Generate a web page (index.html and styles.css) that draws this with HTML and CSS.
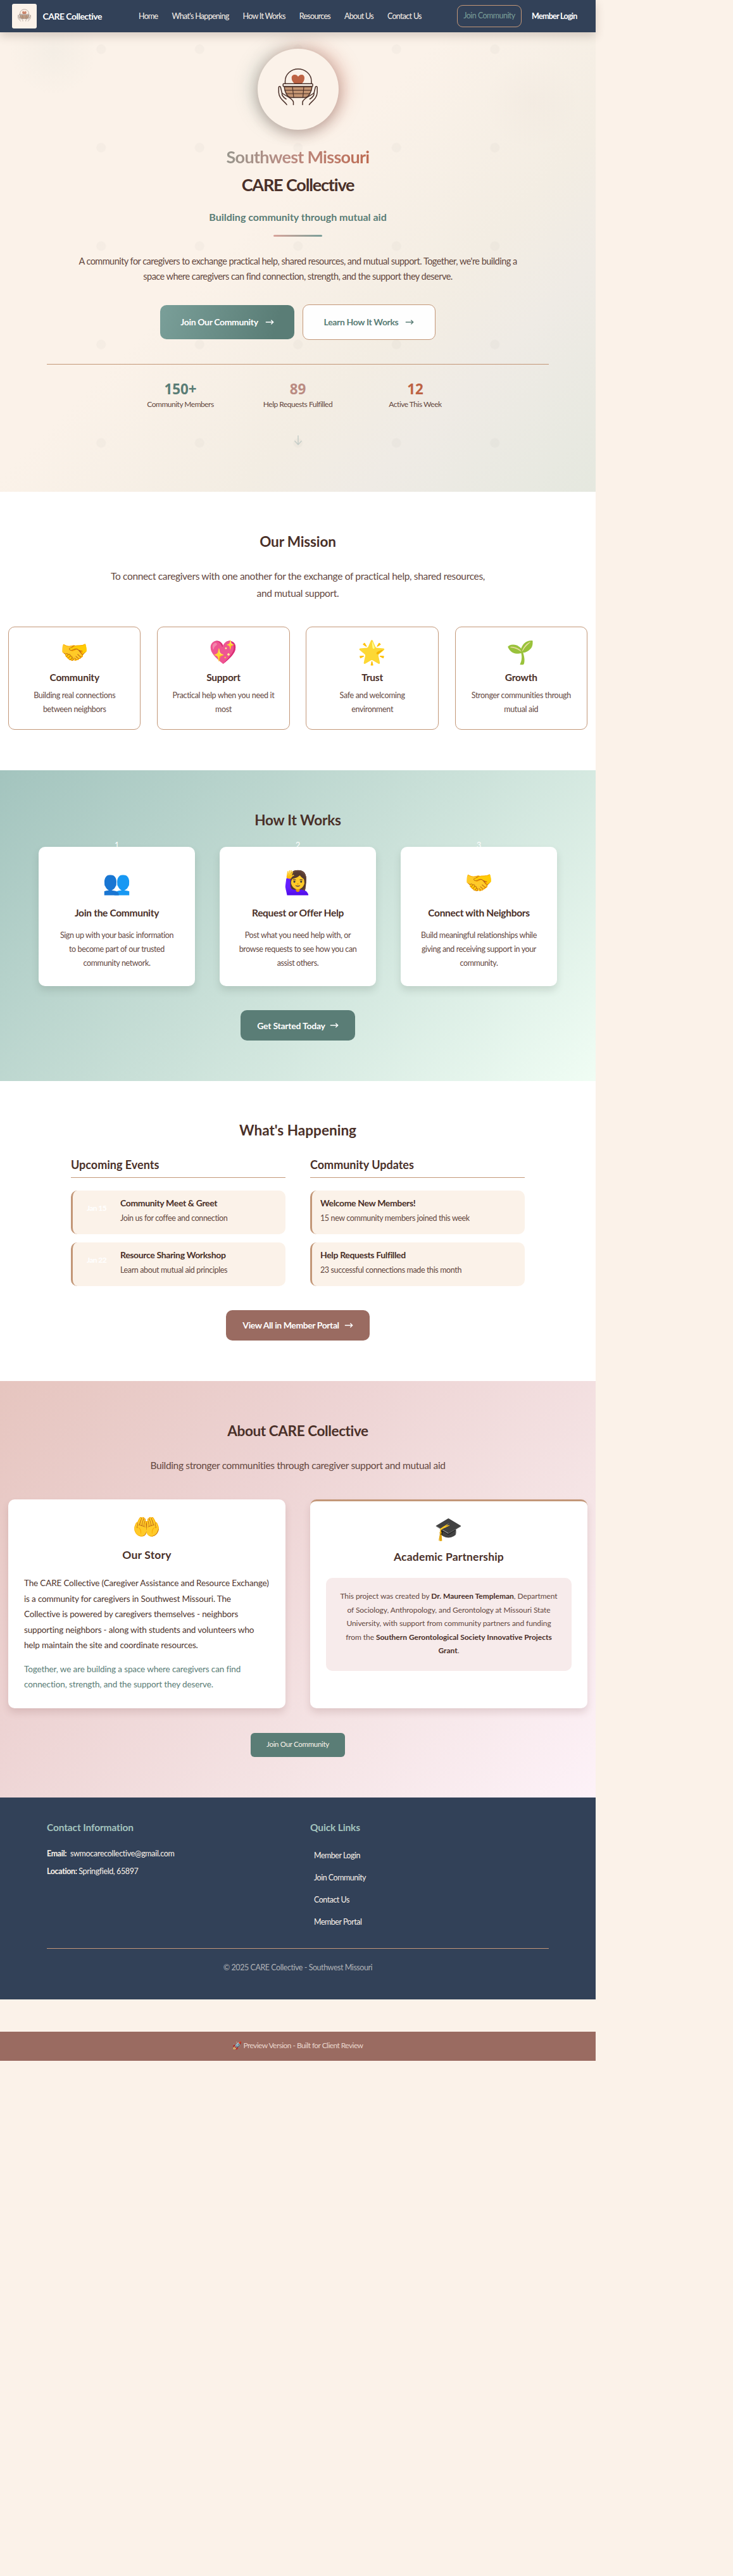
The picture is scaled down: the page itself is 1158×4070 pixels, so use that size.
FILE: index.html
```html
<!DOCTYPE html>
<html lang="en">
<head>
<meta charset="utf-8">
<title>CARE Collective</title>
<link rel="stylesheet" href="styles.css">
</head>
<body>
<svg class="defs" width="0" height="0">
  <symbol id="logo" viewBox="9 12 64 60">
    <g fill="none" stroke="#4a3029" stroke-width="1.5" stroke-linecap="round" stroke-linejoin="round">
      <path d="M20.500 37V33.500C20.500 22 30 14 41 14S62 22 62 33.500V37"/>
      <path fill="#bd6344" stroke="none" d="M35 37C32 34 30.700 31.500 30.700 28C30.700 24.500 33 23 35.800 23C38.500 23 40 24.500 41 26.300C42 24.500 43.800 23 46.400 23C49.500 23 51 25 51 28C51 31.500 49.500 34.500 47 37Z"/>
      <path fill="#c39472" d="M19 42C20 51 24 59 30 59H52C57 59 62 51 63 42Z"/>
      <path d="M20 47.500H62M22 53H60M32 42L34 59M50 42L48.500 59" stroke-width="1.200"/>
      <rect x="17.200" y="37.300" width="46.800" height="4.300" rx="1" fill="#fbf2e9"/>
      <path fill="#fbf2e9" d="M23 70.500C20 65 11 62 10.300 51V43C10.500 41 13 41 13.300 43L15.500 52C22 57 32 60 33.500 66V70.500"/>
      <path d="M15.500 52C15 55 18 59 22 61.500"/>
      <path fill="#fbf2e9" d="M58.500 70.500C61.500 65 70.500 62 71.200 51V43C71 41 68.500 41 68.200 43L66 52C59.500 57 49.500 60 48 66V70.500"/>
      <path d="M66 52C66.500 55 63.500 59 59.500 61.500"/>
    </g>
  </symbol>
  <symbol id="arrow" viewBox="0 0 14 10">
    <path d="M.8 5H12.600M9.300 1.800L12.700 5L9.300 8.200" fill="none" stroke="currentColor" stroke-width="1.400"/>
  </symbol>
</svg>

<div class="page">
  <header class="nav">
    <a class="brand"><span class="brand-mark"><svg><use href="#logo"/></svg></span><span class="brand-name">CARE Collective</span></a>
    <nav class="links"><a>Home</a><a>What's Happening</a><a>How It Works</a><a>Resources</a><a>About Us</a><a>Contact Us</a></nav>
    <a class="join">Join Community</a>
    <a class="login">Member Login</a>
  </header>

  <section class="hero">
    <div class="dots"></div>
    <div class="medallion"><svg><use href="#logo"/></svg></div>
    <h1><span class="region">Southwest Missouri</span><span class="name">CARE Collective</span></h1>
    <p class="tagline">Building community through mutual aid</p>
    <div class="rule"></div>
    <p class="intro">A community for caregivers to exchange practical help, shared resources, and mutual support. Together, we're building a<br>space where caregivers can find connection, strength, and the support they deserve.</p>
    <div class="actions">
      <a class="btn primary">Join Our Community <svg><use href="#arrow"/></svg></a>
      <a class="btn outline">Learn How It Works <svg><use href="#arrow"/></svg></a>
    </div>
    <div class="stats">
      <div><b class="teal">150+</b><span>Community Members</span></div>
      <div><b class="rose">89</b><span>Help Requests Fulfilled</span></div>
      <div><b class="rust">12</b><span>Active This Week</span></div>
    </div>
    <svg class="down" viewBox="0 0 14 17"><path d="M7 1V15M1.500 9.500L7 15.500L12.500 9.500" fill="none" stroke="currentColor" stroke-width="1.400"/></svg>
  </section>

  <section class="mission">
    <h2>Our Mission</h2>
    <p class="lead">To connect caregivers with one another for the exchange of practical help, shared resources,<br>and mutual support.</p>
    <div class="values">
      <article><div class="emoji">🤝</div><h4>Community</h4><p>Building real connections<br>between neighbors</p></article>
      <article><div class="emoji">💖</div><h4>Support</h4><p>Practical help when you need it<br>most</p></article>
      <article><div class="emoji">🌟</div><h4>Trust</h4><p>Safe and welcoming<br>environment</p></article>
      <article><div class="emoji">🌱</div><h4>Growth</h4><p>Stronger communities through<br>mutual aid</p></article>
    </div>
  </section>

  <section class="how">
    <h2>How It Works</h2>
    <div class="steps">
      <div class="step"><span class="num">1</span><article><div class="emoji">👥</div><h4>Join the Community</h4><p>Sign up with your basic information<br>to become part of our trusted<br>community network.</p></article></div>
      <div class="step"><span class="num">2</span><article><div class="emoji">🙋‍♀️</div><h4>Request or Offer Help</h4><p>Post what you need help with, or<br>browse requests to see how you can<br>assist others.</p></article></div>
      <div class="step"><span class="num">3</span><article><div class="emoji">🤝</div><h4>Connect with Neighbors</h4><p>Build meaningful relationships while<br>giving and receiving support in your<br>community.</p></article></div>
    </div>
    <a class="btn solid">Get Started Today <svg><use href="#arrow"/></svg></a>
  </section>

  <section class="news">
    <h2>What's Happening</h2>
    <div class="columns">
      <div>
        <h3>Upcoming Events</h3>
        <article class="event"><span class="date">Jan 15</span><div><h5>Community Meet &amp; Greet</h5><p>Join us for coffee and connection</p></div></article>
        <article class="event"><span class="date">Jan 22</span><div><h5>Resource Sharing Workshop</h5><p>Learn about mutual aid principles</p></div></article>
      </div>
      <div>
        <h3>Community Updates</h3>
        <article class="event"><div><h5>Welcome New Members!</h5><p>15 new community members joined this week</p></div></article>
        <article class="event"><div><h5>Help Requests Fulfilled</h5><p>23 successful connections made this month</p></div></article>
      </div>
    </div>
    <a class="btn earth">View All in Member Portal <svg><use href="#arrow"/></svg></a>
  </section>

  <section class="about">
    <h2>About CARE Collective</h2>
    <p class="lead">Building stronger communities through caregiver support and mutual aid</p>
    <div class="panels">
      <article>
        <div class="emoji">🤲</div><h3>Our Story</h3>
        <p class="story">The CARE Collective (Caregiver Assistance and Resource Exchange)<br>is a community for caregivers in Southwest Missouri. The<br>Collective is powered by caregivers themselves - neighbors<br>supporting neighbors - along with students and volunteers who<br>help maintain the site and coordinate resources.</p>
        <p class="story together">Together, we are building a space where caregivers can find<br>connection, strength, and the support they deserve.</p>
      </article>
      <article class="academic">
        <div class="emoji">🎓</div><h3>Academic Partnership</h3>
        <p class="credit">This project was created by <b>Dr. Maureen Templeman</b>, Department<br>of Sociology, Anthropology, and Gerontology at Missouri State<br>University, with support from community partners and funding<br>from the <b>Southern Gerontological Society Innovative Projects<br>Grant</b>.</p>
      </article>
    </div>
    <a class="small-btn">Join Our Community</a>
  </section>

  <footer class="footer">
    <div class="foot-cols">
      <div>
        <h4>Contact Information</h4>
        <p><b>Email:</b> <a class="mail">swmocarecollective@gmail.com</a></p>
        <p><b>Location:</b> Springfield, 65897</p>
      </div>
      <div>
        <h4>Quick Links</h4>
        <ul><li>Member Login</li><li>Join Community</li><li>Contact Us</li><li>Member Portal</li></ul>
      </div>
    </div>
    <p class="copy">© 2025 CARE Collective - Southwest Missouri</p>
  </footer>
  <div class="preview">🚀 Preview Version - Built for Client Review</div>
</div>
</body>
</html>
```
FILE: styles.css
```css
* { box-sizing: border-box; margin: 0; padding: 0; }
body {
  background: #fbf2e9;
  color: #4a3029;
  font-family: Lato, "Noto Color Emoji", sans-serif;
  white-space: nowrap;
}
.defs { display: block; height: 0; }
.page { width: 941px; text-align: center; }
section { display: flex; flex-direction: column; align-items: center; }
h2 { font-size: 22.5px; line-height: 32px; letter-spacing: -.006em; }
.emoji { font-family: "Noto Color Emoji", sans-serif; font-size: 36px; line-height: 40px; }

/* navigation */
.nav {
  position: relative; z-index: 2;
  height: 51px; padding-left: 19px;
  display: flex; align-items: center;
  background: #324158; color: #fbf2e9;
  box-shadow: 0 6px 14px rgba(74, 48, 41, .2);
}
.brand { display: flex; align-items: center; width: 200px; }
.brand-mark {
  width: 39px; height: 39px; border-radius: 3px; background: #fbf2e9;
  display: flex; align-items: center; justify-content: center;
}
.brand-mark svg { width: 21px; height: 20px; margin-top: -3px; opacity: .75; }
.brand-name { margin-left: 9.500px; font-size: 14px; font-weight: 700; letter-spacing: -.037em; color: #fff; }
.links { display: flex; gap: 22px; width: 503px; font-size: 12.500px; letter-spacing: -.056em; }
.join {
  width: 102px; height: 35px; line-height: 32px;
  border: 1px solid #c39778; border-radius: 9px;
  color: #7a9f99; font-size: 12.500px; letter-spacing: -.044em;
}
.login { margin-left: 16px; color: #fff; font-size: 12.500px; font-weight: 700; letter-spacing: -.056em; }

/* hero */
.hero {
  position: relative; height: 726px; padding-top: 26px;
  background:
    radial-gradient(circle 70px at 84px 30px, rgba(122, 159, 153, .05), transparent),
    radial-gradient(circle 75px at 840px 110px, rgba(160, 130, 130, .03), transparent),
    linear-gradient(135deg, #fbf2e9 0, #fbf2e9 42%, #f3ede3 66%, #efebe5 78%, #e5e8df 100%);
}
.dots {
  position: absolute; top: -51px; left: 82px; width: 777px; height: 777px;
  background: radial-gradient(circle, rgba(122, 115, 115, .045) 7px, transparent 8px) 0 0 / 155.500px 155.500px;
  clip-path: inset(51px 0 0 0);
}
.hero > * { flex: none; }
.hero > :not(.dots) { position: relative; }
.medallion {
  width: 128px; height: 128px; border-radius: 50%; background: #fbf2e9;
  display: flex; align-items: center; justify-content: center;
  box-shadow: 0 8px 20px rgba(74, 48, 41, .24), 10px -4px 28px rgba(210, 120, 100, .36), -10px -2px 28px rgba(122, 159, 153, .3);
}
.medallion svg { width: 64px; height: 60px; margin-top: -8px; }
h1 { margin-top: 20.600px; font-size: 27px; line-height: 44px; }
h1 span { display: block; }
.region {
  letter-spacing: -.026em; color: transparent;
  background: linear-gradient(90deg, #98968d, #ba8b82 45%, #bd6b52);
  background-clip: text; -webkit-background-clip: text;
}
.name { letter-spacing: -.043em; }
.tagline { margin-top: 17px; font-size: 16px; font-weight: 700; line-height: 24px; color: #5a7d76; }
.rule { width: 77px; height: 3px; margin-top: 16.400px; border-radius: 2px; background: linear-gradient(90deg, #d8a49a, #7a9f99); }
.intro { margin-top: 26.600px; font-size: 14.500px; line-height: 24.500px; letter-spacing: -.037em; color: #64483f; }
.actions { display: flex; align-items: center; gap: 13px; height: 56px; margin-top: 31.400px; }
.btn {
  display: flex; align-items: center; justify-content: center;
  height: 48px; border-radius: 10px; color: #fff;
  font-size: 14px; font-weight: 700; letter-spacing: -.025em;
}
.btn svg { width: 14px; height: 10px; margin-left: 11px; }
.primary { width: 212px; height: 54px; background: linear-gradient(105deg, #7a9f99, #5a7d76 85%); }
.outline { width: 210px; height: 56px; background: #fefefe; border: 1px solid #c39778; color: #5a7d76; }
.stats {
  width: 793px; margin-top: 38px; padding-top: 23px;
  border-top: 1px solid #c39778;
  display: grid; grid-template-columns: repeat(3, 185.500px); justify-content: center;
}
.stats b { display: block; font: 700 22.400px/31px "Noto Sans", sans-serif; }
.stats span { display: block; font-size: 12px; line-height: 18px; letter-spacing: -.041em; color: #64483f; }
.teal { color: #5a7d76; }
.rose { color: #ba8b82; }
.rust { color: #bd6344; }
.down { width: 14px; height: 17px; margin-top: 39px; color: #c3ccc7; }

/* mission */
.mission { height: 440px; padding-top: 63px; background: #fff; }
.lead { font-size: 15.500px; line-height: 27px; letter-spacing: -.022em; color: #64483f; }
.mission .lead { margin-top: 24.500px; }
.values { display: grid; grid-template-columns: repeat(4, 209.500px); gap: 25.700px; margin-top: 39.500px; }
.values article { height: 163px; padding-top: 20px; border: 1px solid #c39778; border-radius: 10px; }
h4 { font-size: 15.500px; line-height: 22px; letter-spacing: -.015em; }
.values h4 { margin-top: 8px; }
.values p, .steps p { font-size: 12.500px; line-height: 22px; letter-spacing: -.026em; color: #64483f; }
.values p { margin-top: 7.200px; }

/* how it works */
.how { height: 491px; padding-top: 62.500px; background: linear-gradient(135deg, #a3c4be, #c8dfd7 48%, #f0fdf4); }
.steps { display: grid; grid-template-columns: repeat(3, 247px); gap: 39px; margin-top: 26.500px; }
.steps article {
  position: relative; height: 220px; padding-top: 37px;
  background: #fff; border-radius: 10px; box-shadow: 0 7px 12px rgba(74, 90, 80, .17);
}
.step { position: relative; }
.num { position: absolute; top: -11px; left: 0; width: 100%; font-size: 12.500px; line-height: 18px; color: #fff; }
.steps h4 { margin-top: 16px; letter-spacing: -.02em; }
.steps p { margin-top: 14px; letter-spacing: -.031em; }
.solid { width: 181px; margin-top: 38px; background: #5a7d76; letter-spacing: -.017em; }
.solid svg { margin-left: 7px; }

/* what's happening */
.news { height: 474px; padding-top: 62.300px; background: #fff; }
.news h2 { letter-spacing: .001em; }
.columns { display: grid; grid-template-columns: repeat(2, 339px); gap: 39px; margin-top: 22.200px; text-align: left; }
.news h3 { padding-bottom: 4px; margin-bottom: 19.500px; border-bottom: 1px solid #c39778; font-size: 18px; line-height: 32px; }
.event {
  display: flex; height: 69px; margin-bottom: 13px; padding: 9.400px 0 0 13px;
  background: #fbf2e9; border-left: 3px solid #c39778; border-radius: 10px;
}
.date { width: 62px; padding: 3.300px 0 0 9px; font-size: 12px; font-weight: 700; line-height: 29px; letter-spacing: -.05em; color: #fff; }
h5 { font-size: 14px; line-height: 22px; letter-spacing: -.025em; }
.event p { margin-top: 1.600px; font-size: 12.500px; line-height: 22px; letter-spacing: -.03em; color: #64483f; }
.earth { width: 227px; margin-top: 25px; background: #9a6b61; letter-spacing: -.03em; }
.earth svg { margin-left: 8px; }

/* about */
.about { height: 658px; padding-top: 63px; background: linear-gradient(135deg, #e6c5bf, #edd3d3 35%, #f5e4e5 68%, #fdf2f8); }
.about h2 { letter-spacing: -.017em; }
.about .lead { margin-top: 25px; }
.panels { display: grid; grid-template-columns: repeat(2, 438px); gap: 39px; margin-top: 40px; }
.panels article {
  height: 330px; padding: 23.500px 25px 0; background: #fff; border-radius: 10px;
  box-shadow: 0 7px 12px rgba(110, 60, 60, .16);
}
.panels .academic { border-top: 3px solid #c39778; }
.panels h3 { margin-top: 12.700px; font-size: 17.500px; line-height: 24px; letter-spacing: .01em; }
.story { margin-top: 20.300px; font-size: 13.500px; line-height: 24.500px; letter-spacing: -.012em; text-align: left; color: #4f352d; }
.story + .together { margin-top: 13px; letter-spacing: -.009em; color: #5a7d76; }
.credit {
  height: 147px; margin-top: 20.600px; padding-top: 18.300px; border-radius: 10px;
  background: #f7ebeb; font-size: 12px; line-height: 21.600px; letter-spacing: -.007em; color: #64483f;
}
.credit b { color: #4a3029; letter-spacing: 0; }
.small-btn {
  width: 149px; height: 38px; margin-top: 39px; border-radius: 6px;
  background: #5a7d76; color: #fbf2e9; font-size: 11.500px; line-height: 35px; letter-spacing: -.027em;
}

/* footer */
.footer { height: 319px; padding: 36px 74px 0; background: #324158; color: #fbf2e9; text-align: left; }
.foot-cols { display: grid; grid-template-columns: 416px 1fr; height: 202px; }
.footer h4 { color: #a3c4be; letter-spacing: -.009em; }
.foot-cols p { margin-top: 6px; font-size: 12.500px; line-height: 22px; letter-spacing: -.03em; }
.foot-cols h4 + p { margin-top: 19.600px; }
.mail { margin-left: 3px; letter-spacing: -.024em; }
.footer ul { list-style: none; margin: 15.700px 0 0 6px; font-size: 12.500px; line-height: 35px; letter-spacing: -.04em; }
.footer .copy {
  padding-top: 19.200px; border-top: 1px solid #c39778;
  font-size: 12.500px; line-height: 22px; letter-spacing: -.036em; text-align: center; color: #b0b1b5;
}
.preview {
  height: 46px; margin-top: 51px; background: #9a6b61; color: #e9d6cc;
  font-size: 12px; line-height: 43px; letter-spacing: -.047em;
}
```
